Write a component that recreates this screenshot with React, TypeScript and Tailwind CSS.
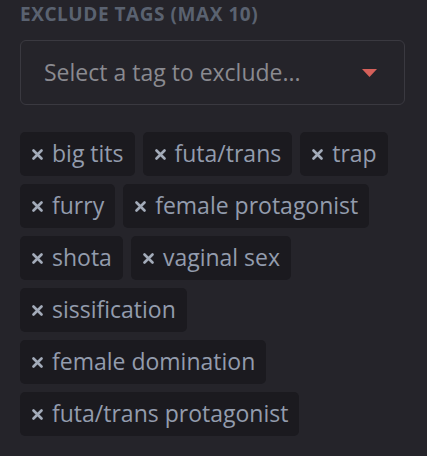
import React from "react";

const tags = [
  "big tits",
  "futa/trans",
  "trap",
  "furry",
  "female protagonist",
  "shota",
  "vaginal sex",
  "sissification",
  "female domination",
  "futa/trans protagonist",
];

function XIcon() {
  return (
    <svg width="11" height="11" viewBox="0 0 11 11" className="shrink-0">
      <path d="M1.5 1.5 L9.5 9.5 M9.5 1.5 L1.5 9.5" stroke="#a3abb9" strokeWidth="2.6" strokeLinecap="round" />
    </svg>
  );
}

export default function App() {
  return (
    <div
      className="w-[427px] h-[456px] bg-[#25242a] overflow-hidden pl-[20px] pr-[22px] pt-[1px]"
      style={{ fontFamily: '"Open Sans", sans-serif' }}
    >
      <div className="text-[19px] leading-[26px] font-bold tracking-[0.55px] text-[#5a6270]">
        EXCLUDE TAGS (MAX 10)
      </div>
      <div className="mt-[13px] h-[65px] w-[385px] rounded-[6px] border border-[#3a3940] flex items-center pl-[23px] pr-[27px]">
        <span className="flex-1 text-[23px] text-[#8a8a90]">Select a tag to exclude...</span>
        <svg width="15" height="8" viewBox="0 0 15 8">
          <path d="M0 0 H15 L7.5 8 Z" fill="#d5605a" />
        </svg>
      </div>
      <div className="mt-[27px] flex flex-wrap gap-[8px] w-[385px]">
        {tags.map((t) => (
          <div
            key={t}
            className="h-[44px] rounded-[5px] bg-[#1b1a1f] flex items-center pl-[12px] pr-[11px] gap-[9px]"
          >
            <XIcon />
            <span className="text-[23px] text-[#939cad] leading-none pb-[2px]">{t}</span>
          </div>
        ))}
      </div>
    </div>
  );
}
